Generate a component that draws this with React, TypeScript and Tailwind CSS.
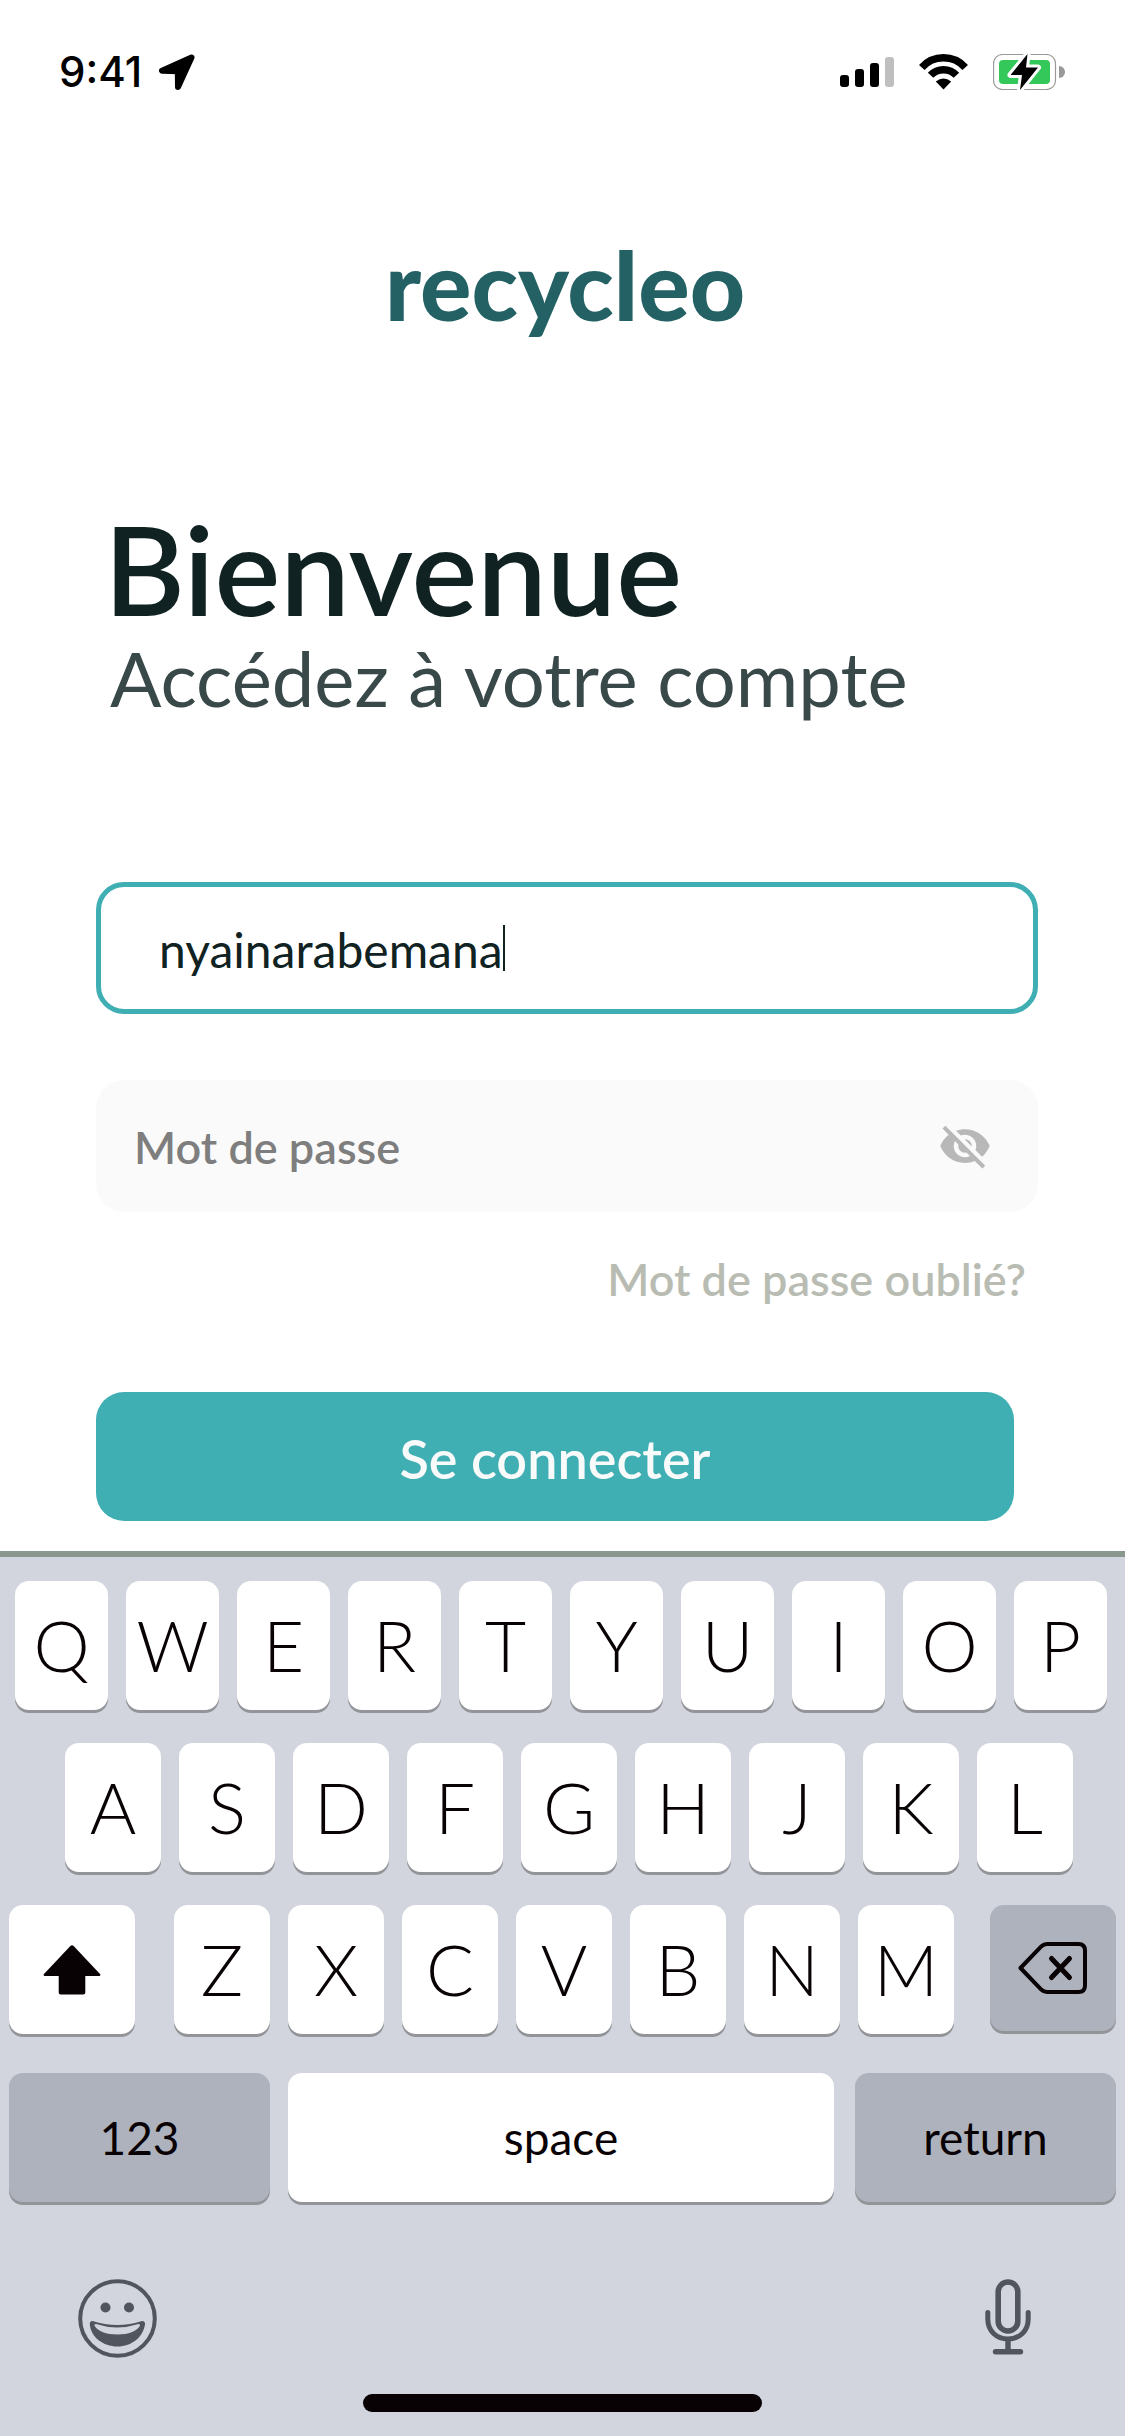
import { useState } from "react";
import type { ReactNode } from "react";
import clsx from "clsx";
import { MdVisibilityOff } from "react-icons/md";

const topRow = ["Q", "W", "E", "R", "T", "Y", "U", "I", "O", "P"];
const middleRow = ["A", "S", "D", "F", "G", "H", "J", "K", "L"];
const bottomRow = ["Z", "X", "C", "V", "B", "N", "M"];

function LocationIcon() {
  return (
    <svg width="36" height="36" viewBox="0 0 36 36" aria-hidden="true">
      <path
        d="M32.5 3.5L3 16.8L18.8 17.2L19 33Z"
        fill="#000"
        stroke="#000"
        strokeWidth="6"
        strokeLinejoin="round"
      />
    </svg>
  );
}

function SignalIcon() {
  return (
    <svg width="54" height="36" viewBox="0 0 54 36" aria-hidden="true">
      <rect x="0" y="21" width="9" height="12" rx="3" />
      <rect x="15" y="15" width="9" height="18" rx="3" />
      <rect x="30" y="9" width="9" height="24" rx="3" />
      <rect x="45" y="3" width="9" height="30" rx="3" fill="#bfbfbf" />
    </svg>
  );
}

function WifiIcon() {
  return (
    <svg width="49" height="36" viewBox="0 0 49 36" fill="none" stroke="#000" strokeWidth="7.5" aria-hidden="true">
      <path d="M2.8 13.5A29.2 29.2 0 0 1 46.2 13.5" />
      <path d="M11.6 21.3A17.6 17.6 0 0 1 37.4 21.3" />
      <path d="M16.8 27.5Q24.5 21.5 32.2 27.5L24.5 35.5Z" fill="#000" stroke="none" />
    </svg>
  );
}

function BatteryIcon() {
  const bolt = "M34.5 0L17.5 21H29L27 36L45 13.5H33Z";
  return (
    <svg width="72" height="36" viewBox="0 0 72 36" aria-hidden="true">
      <rect x="0.5" y="0.5" width="62" height="35" rx="9" fill="#fff" stroke="#999" strokeWidth="1.2" />
      <rect x="6" y="6" width="51" height="24" rx="4" fill="#34c759" />
      <path d="M66 12A6 6 0 0 1 66 24Z" fill="#999" />
      <path d={bolt} fill="#fff" stroke="#fff" strokeWidth="6" strokeLinejoin="round" />
      <path d={bolt} />
    </svg>
  );
}

function ShiftIcon() {
  return (
    <svg width="58" height="50" viewBox="0 0 58 50" fill="#090204" aria-hidden="true">
      <path d="M27.6 0.8Q29 -0.4 30.4 0.8L57 29Q58 30.6 56.5 31H42.3V47.5Q42.3 49.5 40.3 49.5H17.7Q15.7 49.5 15.7 47.5V31H1.5Q0 30.6 1 29Z" />
    </svg>
  );
}

function BackspaceIcon() {
  return (
    <svg width="70" height="52" viewBox="0 0 70 52" fill="none" stroke="#090204" strokeLinecap="round" strokeLinejoin="round" aria-hidden="true">
      <path d="M2.5 26L23.5 4.2Q25.8 2 29 2H60.5Q67 2 67 8.5V43.5Q67 50 60.5 50H29Q25.8 50 23.5 47.8Z" strokeWidth="4" />
      <path d="M33.5 16.5L51.5 35.5M51.5 16.5L33.5 35.5" strokeWidth="5" />
    </svg>
  );
}

function EmojiIcon() {
  return (
    <svg width="79" height="79" viewBox="0 0 79 79" fill="#50555e" aria-hidden="true">
      <circle cx="39.5" cy="39.5" r="37.3" fill="none" stroke="#50555e" strokeWidth="4" />
      <circle cx="27.5" cy="28.5" r="5" />
      <circle cx="51" cy="28.5" r="5" />
      <path
        fillRule="evenodd"
        d="M14.5 42Q39.5 50 64 42Q67.5 42 67 45.5C65 58 54 67.5 39.5 67.5S13 58 11.8 45.5Q11.5 42 14.5 42ZM16.5 46.8Q16 45 18 45Q39 52 60.5 45Q62.5 45 62 46.8Q56.5 55.5 39.5 55.5Q22 55.5 16.5 46.8Z"
      />
    </svg>
  );
}

function MicIcon() {
  return (
    <svg width="46" height="76" viewBox="0 0 46 76" fill="none" stroke="#50555e" strokeLinecap="round" aria-hidden="true">
      <rect x="13.2" y="3" width="19.6" height="49" rx="9.8" strokeWidth="5.6" />
      <path d="M2.8 33.5V40C2.8 52 11.5 60 23 60S43.2 52 43.2 40V33.5" strokeWidth="5" />
      <path d="M23 61V72M10.5 72.7H35.5" strokeWidth="5.4" />
    </svg>
  );
}

type KeyProps = {
  children: ReactNode;
  className?: string;
  label?: string;
  dark?: boolean;
};

function Key({ children, className, label, dark }: KeyProps) {
  return (
    <button
      type="button"
      aria-label={label}
      className={clsx(
        "flex items-center justify-center rounded-[14px] text-[#090204] shadow-[0_3px_0_#929498]",
        dark ? "bg-[#aeb2bd]" : "bg-white",
        className
      )}
    >
      {children}
    </button>
  );
}

function LetterKeys({ letters }: { letters: string[] }) {
  return (
    <>
      {letters.map((letter) => (
        <Key key={letter} className="h-[129px] min-w-0 flex-1 text-[71px] font-light">
          {letter}
        </Key>
      ))}
    </>
  );
}

function Keyboard() {
  return (
    <section aria-label="Keyboard" className="mt-auto border-t-6 border-[#8a978f] bg-[#d2d5de] pt-6 pb-6">
      <div className="flex gap-[18px] pr-[18px] pl-[15px]">
        <LetterKeys letters={topRow} />
      </div>
      <div className="mt-[33px] flex gap-[18px] pr-[52px] pl-[65px]">
        <LetterKeys letters={middleRow} />
      </div>
      <div className="mt-[33px] flex items-start px-[9px]">
        <Key label="Shift" className="h-[129px] w-[126px]">
          <ShiftIcon />
        </Key>
        <div className="mr-9 ml-[39px] flex min-w-0 flex-1 gap-[18px]">
          <LetterKeys letters={bottomRow} />
        </div>
        <Key label="Backspace" className="h-[126px] w-[126px]" dark>
          <BackspaceIcon />
        </Key>
      </div>
      <div className="mt-[39px] flex px-[9px] text-[46px]">
        <Key className="h-[129px] w-[261px]" dark>
          123
        </Key>
        <Key className="mr-[21px] ml-[18px] h-[129px] min-w-0 flex-1">space</Key>
        <Key className="h-[129px] w-[261px]" dark>
          return
        </Key>
      </div>

      <div className="mt-[77px] flex h-[79px] items-start justify-between pr-[94px] pl-[78px]">
        <button type="button" aria-label="Emoji">
          <EmojiIcon />
        </button>
        <button type="button" aria-label="Dictation">
          <MicIcon />
        </button>
      </div>
      <div className="mx-auto mt-9 h-[18px] w-[399px] rounded-full bg-[#090204]" />
    </section>
  );
}

export default function App() {
  const [username, setUsername] = useState("nyainarabemana");
  const [password, setPassword] = useState("");
  const [showPassword, setShowPassword] = useState(false);

  return (
    <div className="flex min-h-screen flex-col bg-white font-['Lato',sans-serif]">
      {/* Status bar */}
      <header className="flex h-[90px] items-end justify-between pr-[60px] pl-[59px]">
        <div className="flex items-center gap-[17px]">
          <span className="font-['Inter',sans-serif] text-[42px] leading-9 font-medium text-black">9:41</span>
          <LocationIcon />
        </div>
        <div className="flex items-center gap-[25px]">
          <SignalIcon />
          <WifiIcon />
          <BatteryIcon />
        </div>
      </header>

      <main className="pr-[87px] pl-24">
        <p className="mt-[146px] pr-1 text-center text-[96px] leading-[96px] font-black text-[#236164]">recycleo</p>

        <h1 className="mt-[174px] pl-2 text-[124px] leading-[124px] font-semibold text-[#102222]">Bienvenue</h1>
        <p className="mt-[10px] pl-[14px] text-[76px] leading-[76px] text-[#394848]">Accédez à votre compte</p>

        <form className="mt-[166px]" onSubmit={(e) => e.preventDefault()}>
          <label className="flex h-[132px] items-center rounded-[28px] border-5 border-[#3fafb4] pl-[58px]">
            <input
              type="text"
              aria-label="Identifiant"
              value={username}
              onChange={(e) => setUsername(e.target.value)}
              className="field-sizing-content pt-1 text-[48px] text-[#102222] caret-transparent outline-none"
            />
            <span className="h-[46px] w-[2px] bg-[#102222]" />
          </label>

          <div className="mt-[66px] flex h-[132px] items-center rounded-[28px] bg-[#fafafa] pr-[46px] pl-[38px]">
            <input
              type={showPassword ? "text" : "password"}
              aria-label="Mot de passe"
              placeholder="Mot de passe"
              value={password}
              onChange={(e) => setPassword(e.target.value)}
              className="min-w-0 flex-1 pt-1 text-[45px] font-semibold text-[#102222] outline-none placeholder:text-[#7e7e7e]"
            />
            <button
              type="button"
              aria-label="Afficher le mot de passe"
              onClick={() => setShowPassword(!showPassword)}
            >
              <MdVisibilityOff className="size-[54px] text-[#b8b8b8]" />
            </button>
          </div>

          <div className="mt-[45px] flex justify-end pr-3">
            <a href="#" className="text-[45px] leading-[45px] font-semibold text-[#b9bcb2]">
              Mot de passe oublié?
            </a>
          </div>

          <div className="mt-[90px] mb-[30px] pr-6">
            <button
              type="submit"
              className="h-[129px] w-full rounded-[28px] bg-[#3fafb4] pt-1 text-[54px] font-semibold text-[#f9fafa]"
            >
              Se connecter
            </button>
          </div>
        </form>
      </main>

      <Keyboard />
    </div>
  );
}
